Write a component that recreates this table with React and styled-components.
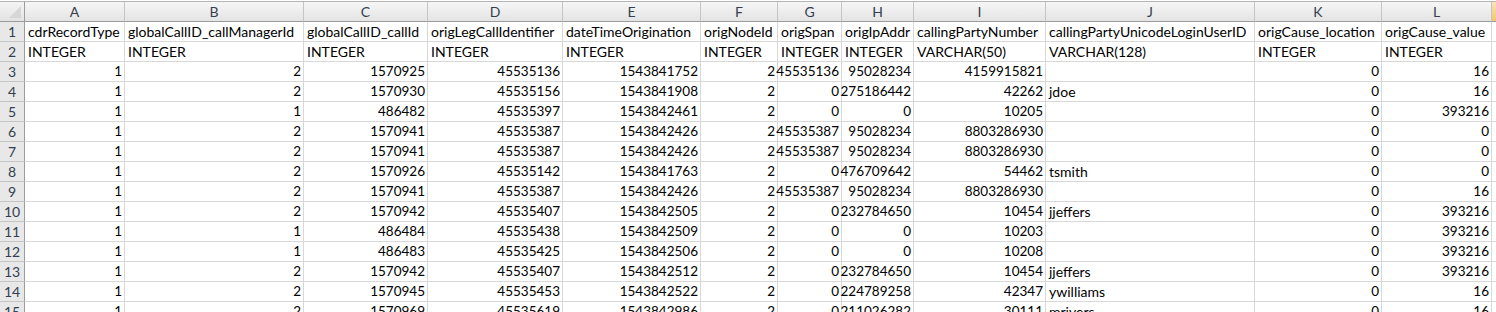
import React from "react";
import styled, { createGlobalStyle } from "styled-components";

const GlobalStyle = createGlobalStyle`
  html, body {
    margin: 0;
    padding: 0;
    background: #ffffff;
    overflow: hidden;
  }
  body {
    font-family: Lato, "Liberation Sans", sans-serif;
  }
`;

// --- column widths, in px, border included ---
const COLS = [25, 100, 179, 124, 135, 138, 77, 64, 72, 132, 209, 127, 110];
const LETTERS = ["A", "B", "C", "D", "E", "F", "G", "H", "I", "J", "K", "L"];

const Frame = styled.div`
  padding-top: 1px;
  width: 1496px;
  height: 312px;
  overflow: hidden;
  background: #ffffff;
`;

const Sheet = styled.div`
  display: grid;
  grid-template-columns: ${COLS.map((w) => `${w}px`).join(" ")} 1fr;
  grid-auto-rows: 20px;
  border-top: 1px solid #b5b5b5;
`;

// --- headers ---
const Corner = styled.div`
  position: relative;
  background: linear-gradient(#f4f4f4, #e3e3e3);
  border-right: 1px solid #9c9c9c;
  border-bottom: 1px solid #9c9c9c;

  &::after {
    content: "";
    position: absolute;
    right: 3px;
    bottom: 3px;
    border-left: 12px solid transparent;
    border-bottom: 12px solid #d6d6d6;
  }
`;

const ColHead = styled.div`
  display: flex;
  align-items: center;
  justify-content: center;
  background: ${(p) =>
    p.$active
      ? "linear-gradient(#fbe4b6, #f4c66a)"
      : "linear-gradient(#f6f6f6, #e4e4e4)"};
  border-right: 1px solid #c5c5c5;
  border-bottom: 1px solid #9c9c9c;
  color: #333f4f;
  font-size: 14px;
`;

const RowHead = styled.div`
  display: flex;
  align-items: center;
  justify-content: center;
  background: #e8e8e8;
  border-right: 1px solid #9c9c9c;
  border-bottom: 1px solid #c5c5c5;
  color: #333f4f;
  font-size: 14px;
`;

// --- cells ---
const Cell = styled.div`
  display: flex;
  align-items: flex-end;
  justify-content: ${(p) => (p.$num ? "flex-end" : "flex-start")};
  padding: 0 2px 1px 3px;
  border-right: 1px solid #d8d8d8;
  border-bottom: 1px solid #d8d8d8;
  color: #000000;
  font-size: ${(p) => (p.$num ? "13.5px" : "14px")};
  line-height: 17px;
  white-space: nowrap;
  min-width: 0;
`;

const HEAD = [
  "cdrRecordType",
  "globalCallID_callManagerId",
  "globalCallID_callId",
  "origLegCallIdentifier",
  "dateTimeOrigination",
  "origNodeId",
  "origSpan",
  "origIpAddr",
  "callingPartyNumber",
  "callingPartyUnicodeLoginUserID",
  "origCause_location",
  "origCause_value",
];

const TYPES = [
  "INTEGER",
  "INTEGER",
  "INTEGER",
  "INTEGER",
  "INTEGER",
  "INTEGER",
  "INTEGER",
  "INTEGER",
  "VARCHAR(50)",
  "VARCHAR(128)",
  "INTEGER",
  "INTEGER",
];

const DATA = [
  ["1", "2", "1570925", "45535136", "1543841752", "2", "45535136", "95028234", "4159915821", "", "0", "16"],
  ["1", "2", "1570930", "45535156", "1543841908", "2", "0", "275186442", "42262", "jdoe", "0", "16"],
  ["1", "1", "486482", "45535397", "1543842461", "2", "0", "0", "10205", "", "0", "393216"],
  ["1", "2", "1570941", "45535387", "1543842426", "2", "45535387", "95028234", "8803286930", "", "0", "0"],
  ["1", "2", "1570941", "45535387", "1543842426", "2", "45535387", "95028234", "8803286930", "", "0", "0"],
  ["1", "2", "1570926", "45535142", "1543841763", "2", "0", "476709642", "54462", "tsmith", "0", "0"],
  ["1", "2", "1570941", "45535387", "1543842426", "2", "45535387", "95028234", "8803286930", "", "0", "16"],
  ["1", "2", "1570942", "45535407", "1543842505", "2", "0", "232784650", "10454", "jjeffers", "0", "393216"],
  ["1", "1", "486484", "45535438", "1543842509", "2", "0", "0", "10203", "", "0", "393216"],
  ["1", "1", "486483", "45535425", "1543842506", "2", "0", "0", "10208", "", "0", "393216"],
  ["1", "2", "1570942", "45535407", "1543842512", "2", "0", "232784650", "10454", "jjeffers", "0", "393216"],
  ["1", "2", "1570945", "45535453", "1543842522", "2", "0", "224789258", "42347", "ywilliams", "0", "16"],
  ["1", "2", "1570969", "45535619", "1543842986", "2", "0", "211026282", "30111", "mrivers", "0", "16"],
];

const isNum = (v) => /^\d+$/.test(v);

export default function App() {
  return (
    <Frame>
      <GlobalStyle />
      <Sheet>
        <Corner />
        {LETTERS.map((l) => (
          <ColHead key={l}>{l}</ColHead>
        ))}
        <ColHead $active />

        <RowHead>1</RowHead>
        {HEAD.map((h) => (
          <Cell key={h}>{h}</Cell>
        ))}
        <Cell />

        <RowHead>2</RowHead>
        {TYPES.map((t, i) => (
          <Cell key={i}>{t}</Cell>
        ))}
        <Cell />

        {DATA.map((row, r) => (
          <React.Fragment key={r}>
            <RowHead>{r + 3}</RowHead>
            {row.map((v, c) => (
              <Cell key={c} $num={isNum(v)}>
                {v}
              </Cell>
            ))}
            <Cell />
          </React.Fragment>
        ))}
      </Sheet>
    </Frame>
  );
}
